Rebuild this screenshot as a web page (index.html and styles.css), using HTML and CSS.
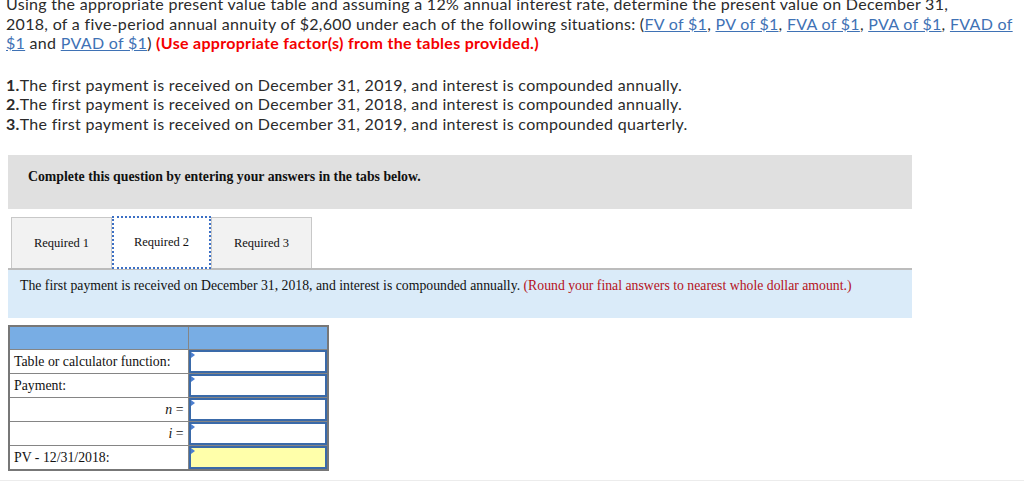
FILE: index.html
```html
<!DOCTYPE html>
<html lang="en">
<head>
  <meta charset="UTF-8">
  <title>Present value of annuity</title>
  <link rel="stylesheet" href="styles.css">
</head>
<body>
  <div class="page">
    <p class="intro">Using the appropriate present value table and assuming a 12% annual interest rate, determine the present value on December 31,<br>2018, of a five-period annual annuity of $2,600 under each of the following situations: (<a href="#">FV of $1</a>, <a href="#">PV of $1</a>, <a href="#">FVA of $1</a>, <a href="#">PVA of $1</a>, <a href="#">FVAD of $1</a> and <a href="#">PVAD of $1</a>) <b class="warn">(Use appropriate factor(s) from the tables provided.)</b></p>
    <p class="cases">
      <b>1.</b>The first payment is received on December 31, 2019, and interest is compounded annually.<br>
      <b>2.</b>The first payment is received on December 31, 2018, and interest is compounded annually.<br>
      <b>3.</b>The first payment is received on December 31, 2019, and interest is compounded quarterly.
    </p>

    <div class="work">
      <div class="banner">Complete this question by entering your answers in the tabs below.</div>

      <div class="tabs">
        <span class="tab">Required 1</span>
        <span class="tab active">Required 2</span>
        <span class="tab">Required 3</span>
      </div>
      <div class="prompt">The first payment is received on December 31, 2018, and interest is compounded annually. <span class="hint">(Round your final answers to nearest whole dollar amount.)</span></div>

      <table class="answers">
        <tr class="head"><th></th><th></th></tr>
        <tr><td>Table or calculator function:</td><td class="cell"><span class="input"></span></td></tr>
        <tr><td>Payment:</td><td class="cell"><span class="input"></span></td></tr>
        <tr><td class="var"><i>n</i> =</td><td class="cell"><span class="input"></span></td></tr>
        <tr><td class="var"><i>i</i> =</td><td class="cell"><span class="input"></span></td></tr>
        <tr><td>PV - 12/31/2018:</td><td class="cell"><span class="input total"></span></td></tr>
      </table>
    </div>
  </div>
  <div class="rule"></div>
</body>
</html>
```

FILE: styles.css
```css
body {
  margin: 0;
  color: #222;
  overflow: hidden;
}

.page {
  padding: 0 8px;
}

.intro,
.cases {
  font-family: Lato, "Open Sans", sans-serif;
  font-size: 16px;
  letter-spacing: 0.3px;
  line-height: 19.5px;
  color: #2b2b2b;
  margin: -6px -8px 0 -2px;
}

.cases {
  margin-top: 22px;
  margin-bottom: 0;
}

.intro a {
  color: #3f72b5;
  text-decoration: underline;
}

.warn {
  color: #f40000;
}

.work {
  width: 904px;
}

.banner {
  margin-top: 22px;
  height: 54px;
  background: #e0e0e0;
  font: bold 13.8px "Liberation Serif", serif;
  color: #111;
  padding: 14px 20px 0;
  box-sizing: border-box;
}

.tabs {
  display: flex;
  margin: 8px 0 0 3px;
  height: 51px;
}

.tab {
  width: 99px;
  display: flex;
  align-items: center;
  justify-content: center;
  background: #f2f2f2;
  border: 1px solid #c8c8c8;
  border-bottom: none;
  font: 12.5px "Liberation Serif", serif;
  color: #111;
}

.tab.active {
  background: #fff;
  border: 2px dotted #3b6fc4;
  height: 53px;
  margin: -1px 0 -2px;
  box-sizing: border-box;
  position: relative;
}

.prompt {
  border-top: 2px solid #bcbcbc;
  background: #daebf9;
  height: 50px;
  box-sizing: border-box;
  padding: 8px 12px 0;
  font: 13.75px "Liberation Serif", serif;
  color: #111;
}

.hint {
  color: #b5121b;
}

.answers {
  margin-top: 7px;
  width: 321px;
  table-layout: fixed;
  border-collapse: collapse;
  border: 2px solid #777;
  font: 13.8px "Liberation Serif", serif;
  color: #111;
}

.answers td,
.answers th {
  border: 1px solid #858585;
  padding: 0;
  height: 23px;
}

.answers .head th {
  background: #78ade4;
  height: 22px;
}

.answers td:first-child,
.answers th:first-child {
  width: 179px;
  padding: 0 4px;
  box-sizing: border-box;
}

.answers .var {
  text-align: right;
  padding-right: 8px;
}

.answers .cell {
  position: relative;
}

.input {
  display: block;
  height: 23px;
  border: 2px solid #3a6aa9;
  box-sizing: border-box;
  background: #fff;
}

.input.total {
  background: #ffffaa;
}

.cell::before {
  content: "";
  position: absolute;
  left: 2px;
  top: 2px;
  border-left: 4px solid #4c7fd0;
  border-top: 3px solid transparent;
  border-bottom: 3px solid transparent;
}

.rule {
  margin-top: 9px;
  border-top: 1px solid #ececec;
}
```
